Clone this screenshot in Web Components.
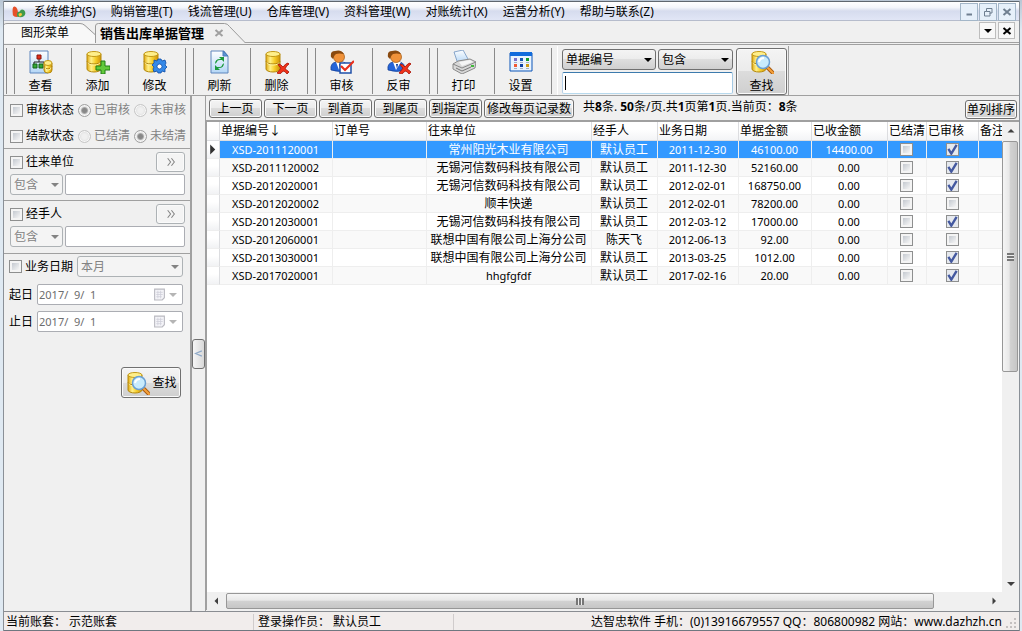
<!DOCTYPE html>
<html lang="zh-CN">
<head>
<meta charset="utf-8">
<title>销售出库单据管理</title>
<style>
html{height:100%}
body{margin:0;min-height:100%;display:flex;background:linear-gradient(#b9c6d4 0,#dfe9f2 30px,#dfe9f2);font-family:"Noto Sans","Noto Sans CJK SC",sans-serif;font-size:12px;line-height:16px;color:#000}
</style>
</head>
<body>
<sales-window></sales-window>
<script>
const BASE = `*{box-sizing:border-box}button,input,select{font:inherit;color:inherit;margin:0}`;
function define(name, css, html, setup) {
  const t = document.createElement('template');
  t.innerHTML = `<style>${BASE}${css}</style>${html}`;
  customElements.define(name, class extends HTMLElement {
    constructor() {
      super();
      this.attachShadow({ mode: 'open' }).append(t.content.cloneNode(true));
    }
    connectedCallback() {
      if (this.ready) return;
      this.ready = true;
      if (setup) setup(this, this.shadowRoot);
    }
  });
}

/* ---------- icons ---------- */
const cyl = (x, y, w, h) => `<path d="M${x} ${y + 3}v${h - 6}a${w / 2} 3 0 0 0 ${w} 0v-${h - 6}z" fill="url(#g)" stroke="#b58a0c"/><path d="M${x} ${y + h / 2}a${w / 2} 2.500 0 0 0 ${w} 0" fill="none" stroke="#a87c08"/><path d="M${x + 1} ${y + h / 2 + 1}a${w / 2 - 1} 2.500 0 0 0 ${w - 2} 0" fill="none" stroke="#fff3a0"/><ellipse cx="${x + w / 2}" cy="${y + 3}" rx="${w / 2}" ry="2.500" fill="#ffef8a" stroke="#c49a18"/>`;
const gold = `<defs><linearGradient id="g"><stop offset="0" stop-color="#e0a810"/><stop offset=".3" stop-color="#fff08a"/><stop offset=".6" stop-color="#f7cf2c"/><stop offset="1" stop-color="#cf920a"/></linearGradient><linearGradient id="b" x2="0" y2="1"><stop offset="0" stop-color="#fdfeff"/><stop offset="1" stop-color="#b4d6f6"/></linearGradient></defs>`;
const cross = `<path d="M13 14q3 0 5 3q3-4 5-4l1 1q-3 2-4 5q2 1 4 3l-2 2q-2-3-4-3q-2 3-4 3l-2-1q2-2 4-5q-2-1-3-4z" fill="#f0331a" stroke="#a81408" stroke-width=".8"/>`;
const person = `<path d="M1 20q-1-7 5-8h7q5 1 5 8q-8 3-17 0z" fill="#2464d8" stroke="#123c90" stroke-width=".7"/><path d="M6 12l3 8 5-8z" fill="#fff"/><path d="M9 14l1 5 1-5z" fill="#0b3c9a"/><circle cx="9" cy="7" r="5.500" fill="#f0923a" stroke="#a2560c" stroke-width=".7"/><path d="M1 7Q0 1 5 1q6-2 9 3q-5-1-8 0q-2 1-3 5z" fill="#8a4a10"/>`;
const lens = `<path d="M18 18l5 5" stroke="#a85a10" stroke-width="4" stroke-linecap="round"/><path d="M18 18l5 5" stroke="#f6a23c" stroke-width="2" stroke-linecap="round"/><circle cx="13" cy="12" r="6.500" fill="#c8ebfd" stroke="#6a9fd4" stroke-width="1.500"/><path d="M9 12q1-4 5-4" stroke="#fff" stroke-width="2" fill="none"/>`;
const ICONS = {
  view: `<path d="M1 1h18v22H1z" fill="url(#b)" stroke="#5f86bd"/><path d="M10 8v4M5 15v-3h10v2" stroke="#222" fill="none"/><path d="M8 5h4v4H8z" fill="#e0301c" stroke="#8c1408"/><path d="M4 14h4v4H4zM10 14h4v4h-4z" fill="#35a835" stroke="#14641a"/>` + cyl(15, 10, 8, 13),
  add: cyl(1, 1, 14, 21) + `<path d="M15 11h4v5h5v4h-5v4h-4v-4h-5v-4h5z" fill="#62c93c" stroke="#217d16"/>`,
  edit: cyl(1, 1, 14, 21) + `<g fill="#3489e8" stroke="#0c4da8" stroke-width=".8"><path d="M15 9h3l1 2 3-1 1 3-1 2 2 2-2 2v3l-3-1-1 2h-3l-1-2-3 1-1-3 1-2-2-2 2-2 0-3 3 1z"/><circle cx="16.500" cy="16.500" r="2.500" fill="#fff"/></g>`,
  refresh: `<path d="M3 1h13l4 5v17H3z" fill="url(#b)" stroke="#5f86bd"/><path d="M15 1v5h5z" fill="#5b93d6" stroke="#4a7cba"/><path d="M7 14q0-5 5-5h1L11 7h5v5l-2-2h-2q-3 0-3 2zM16 13q0 5-5 5h-1l2 2H7v-5l2 2h2q3 0 3-2z" fill="#1c9a3c"/>`,
  remove: cyl(1, 1, 14, 21) + cross,
  audit: person + `<path d="M10 13h11v10H10z" fill="#fff" stroke="#2050a8" stroke-width="1.500"/><path d="M11 16l4 4 9-9" fill="none" stroke="#e8301c" stroke-width="2.200"/>`,
  unaudit: person + cross,
  print: `<path d="M5 11L2 2l9-2 5 9v4H6z" fill="url(#b)" stroke="#6f93c0" stroke-width=".8"/><path d="M1 14l5-3 12-2 6 3-1 6-13 6-9-5z" fill="#d8d8d8" stroke="#8a8a8a"/><path d="M1 14l9 4 14-6" fill="none" stroke="#888"/><path d="M4 18l6 3 9-4" fill="none" stroke="#777"/><path d="M7 12l11-2 3 2-11 4z" fill="#f6f6f6"/><path d="M19 16h3" stroke="#42b83c" stroke-width="2"/>`,
  config: `<path d="M1 3h22v18H1z" fill="#eaf4fe" stroke="#0a55b8"/><path d="M1 2h22v4H1z" fill="#126cdc"/><path d="M5 8h3v3H5z" fill="#7a70c8"/><path d="M5 14h3v3H5z" fill="#f05a35"/><path d="M11 8h3v3h-3z" fill="#1659b4"/><path d="M11 14h3v3h-3z" fill="#0d43a4"/><path d="M17 8h3v3h-3z" fill="#149a28"/><path d="M17 14h3v3h-3z" fill="#cc9c14"/><path d="M5 12.500h3M11 12.500h3M17 12.500h3M5 18.500h3M11 18.500h3M17 18.500h3" stroke="#a0b0c4"/>`,
  find: cyl(2, 1, 14, 21) + lens,
  logo: `<path d="M3 18Q1 3 6 4q5 0 6 16-6 2-9-2z" fill="#e6512a"/><path d="M10 20q-2-8 4-8 2-5 7-2 4 5 0 9-5 4-11 1z" fill="#3f9a4c"/><path d="M12 16q3-3 6 0-1 4-5 4z" fill="#f3c63c"/>`,
  min: `<path d="M7 15h11v4H7z" fill="#6f7f90"/>`,
  restore: `<path d="M9 5h11v9h-4v6H5v-9h4z M9 11h7v4" fill="none" stroke="#6f7f90" stroke-width="2"/>`,
  close: `<path d="M5 6l14 12M19 6L5 18" fill="none" stroke="currentColor" stroke-width="4"/>`,
  down: `<path d="M4 8h16l-8 8z" fill="currentColor"/>`,
  up: `<path d="M5 15h14l-7-7z" fill="currentColor"/>`,
  left: `<path d="M16 5v14l-7-7z" fill="currentColor"/>`,
  right: `<path d="M9 5v14l7-7z" fill="currentColor"/>`,
  marker: `<path d="M7 1v22l11-11z" fill="currentColor"/>`,
  more: `<path d="M4 3l7 9-7 9M13 3l7 9-7 9" fill="none" stroke="currentColor" stroke-width="2.500"/>`,
  fold: `<path d="M21 5L4 12l17 7" fill="none" stroke="#8fa9c8" stroke-width="3"/>`,
  calendar: `<path d="M3 2h18v16l-4 4H3z" fill="#f4f4f8" stroke="#b9b9c0" stroke-width="2"/><path d="M6 8h12M6 12h12M6 16h10M9 5v14M14 5v14" stroke="#d0d0da" stroke-width="1.500"/>`
};
define('ui-icon', `:host{display:block;width:24px;height:24px;flex:none}svg{display:block;width:100%;height:100%}`, `<svg viewBox="0 0 24 24" aria-hidden="true"></svg>`,
  (el, r) => { r.querySelector('svg').innerHTML = gold + ICONS[el.getAttribute('name')]; });

/* ---------- controls ---------- */
define('combo-box', `:host{display:block;position:relative;height:21px;color:#000}
select{appearance:none;width:100%;height:100%;padding:0 16px 0 3px;border:1px solid #707070;border-radius:3px;background:linear-gradient(#f4f4f4,#ececec 50%,#dedede 50%,#d0d0d0);display:block;opacity:1;line-height:16px}
:host([disabled]){color:#838383}:host([disabled]) select{background:#f4f4f4;border-color:#adb2b5}
ui-icon{position:absolute;right:2px;top:5px;width:12px;height:12px;pointer-events:none}`,
`<select><option></option></select><ui-icon name="down"></ui-icon>`, (el, r) => {
  const s = r.querySelector('select');
  s.options[0].textContent = el.getAttribute('value');
  s.setAttribute('aria-label', el.getAttribute('label'));
  s.disabled = el.hasAttribute('disabled');
});
define('text-field', `:host{display:block;height:21px}input{display:block;width:100%;height:100%;padding:0 3px;border:1px solid #abadb3;border-radius:2px;background:#fff;outline:0}
:host([active]) input{border-color:#3d7bad #a4c9e3 #b7d9ed #b5cfe7;background:#fff linear-gradient(#000,#000) 2px center/1px 14px no-repeat}`,
`<input type="text">`, (el, r) => {
  const i = r.querySelector('input');
  i.setAttribute('aria-label', el.getAttribute('label'));
  i.disabled = el.hasAttribute('disabled');
});
define('date-field', `:host{display:flex;align-items:center;gap:4px;color:#6d6d6d}
label{color:#000;width:24px;flex:none}
.f{flex:1;display:flex;align-items:center;gap:1px;height:21px;border:1px solid #abadb3;border-radius:2px;background:#fff;padding:0 3px 0 1px;color:#b5b5b5}
input{flex:1;min-width:0;width:0;border:0;background:none;padding:0;color:#6d6d6d;outline:0;font-size:11px;height:18px;white-space:pre}
ui-icon{width:12px;height:12px}.c{width:13px;height:13px}`,
`<label for="d"></label><div class="f"><input id="d" type="text" disabled><ui-icon class="c" name="calendar"></ui-icon><ui-icon name="down"></ui-icon></div>`, (el, r) => {
  r.querySelector('label').textContent = el.getAttribute('label');
  r.querySelector('input').value = el.getAttribute('value');
});
define('check-box', `:host{display:block}label{display:flex;align-items:center;gap:3px}
input{appearance:none;width:13px;height:13px;flex:none;border:1px solid #8e8f8f;background:linear-gradient(135deg,#c4c9d0,#f6f6f6) content-box,#f4f4f4;padding:2px;display:block}
input:checked{background:url("data:image/svg+xml,%3Csvg xmlns='http://www.w3.org/2000/svg' viewBox='0 0 11 11'%3E%3Cpath d='M2 5l2.500 4L9 1.500' fill='none' stroke='%234459a0' stroke-width='2'/%3E%3C/svg%3E") border-box,#e6e9ee}`,
`<label><input type="checkbox"><slot></slot></label>`, (el, r) => {
  const i = r.querySelector('input');
  i.checked = el.hasAttribute('checked');
  if (el.getAttribute('label')) i.setAttribute('aria-label', el.getAttribute('label'));
});
define('radio-button', `:host{display:block;color:#838383}label{display:flex;align-items:center;gap:3px}
input{appearance:none;width:13px;height:13px;flex:none;border:1px solid #c6c6c6;border-radius:50%;background:#f0f0f0;box-shadow:inset 0 0 0 1px #f8f8f8,inset 0 0 3px #bbb}
input:checked{border-color:#a0a0a0;background:radial-gradient(#888 0 2px,#aaa 3px,#f4f4f4 4px)}`,
`<label><input type="radio" disabled><slot></slot></label>`, (el, r) => { r.querySelector('input').checked = el.hasAttribute('checked'); });
define('push-button', `:host{display:block;height:19px}
button{width:100%;height:100%;display:flex;align-items:center;justify-content:center;padding:0;border:1px solid #707070;border-radius:3px;background:linear-gradient(#f4f4f4,#ebebeb 50%,#dcdcdc 50%,#cfcfcf);box-shadow:inset 0 0 0 1px #fafafa;white-space:nowrap;overflow:hidden}
:host([stacked]) button{flex-direction:column;gap:4px}:host([inline]) button{gap:2px;padding-left:1px}
:host([quiet]) button{background:#f4f4f4;border-color:#adb2b5;color:#838383}`,
`<button type="button"><slot></slot></button>`, (el, r) => {
  if (el.getAttribute('label')) r.querySelector('button').setAttribute('aria-label', el.getAttribute('label'));
});

/* ---------- menu bar ---------- */
define('menu-bar', `:host{display:flex;align-items:center;height:20px;padding:1px 3px 0 7px;border-top:1px solid #5f676f;border-bottom:1px solid #b6bccc;background:linear-gradient(#fff,#f4f6fb 30%,#d6dcee 50%,#e1e6f6)}
ui-icon.l{width:15px;height:15px;margin-right:8px}nav{display:flex;gap:15px;flex:1}a{color:#000;text-decoration:none;white-space:nowrap}
.w{display:flex;gap:1px}button{width:18px;height:18px;padding:0;border:1px solid #a3b6c8;background:#e6f0fa;display:grid;place-items:center;color:#6f7f90}button ui-icon{width:12px;height:12px}`,
`<ui-icon class="l" name="logo"></ui-icon><nav></nav><div class="w"><button aria-label="最小化"><ui-icon name="min"></ui-icon></button><button aria-label="还原"><ui-icon name="restore"></ui-icon></button><button aria-label="关闭"><ui-icon name="close"></ui-icon></button></div>`,
(el, r) => {
  r.querySelector('nav').innerHTML = ['系统维护(S)', '购销管理(T)', '钱流管理(U)', '仓库管理(V)', '资料管理(W)', '对账统计(X)', '运营分析(Y)', '帮助与联系(Z)'].map(t => `<a href="#">${t}</a>`).join('');
});

/* ---------- document tabs ---------- */
define('tab-strip', `:host{display:flex;align-items:flex-end;height:24px;background:#f0f0f0;border-bottom:3px double #a0a0a0}
.t{position:relative;height:20px;display:flex;align-items:center;padding-top:2px}
.t>svg{position:absolute;left:0;bottom:-1px;width:100%;height:20px}
.t>a,.t>b,.t>ui-icon{position:relative}a{color:#000;text-decoration:none}
.one{width:91px;padding-left:17px}.two{width:150px;padding-left:5px;font-size:13px}
.two ui-icon{width:12px;height:12px;margin-left:9px;color:#a0a0a0}
.b{margin-left:auto;display:flex;gap:2px;padding:0 4px 3px 0}button{width:17px;height:17px;padding:0;border:1px solid #bdbdbd;background:#f8f8f8;display:grid;place-items:center}button ui-icon{width:12px;height:12px}`,
`<div class="t one"><svg viewBox="0 0 91 20" preserveAspectRatio="none"><path d="M0 1.500q1-1 3-1h74l14 12V20H0z" fill="#f8f8f8"/><path d="M0 1.500q1-1 3-1h73q3 0 5 2l10 9" fill="none" stroke="#9a9a9a"/></svg><a href="#">图形菜单</a></div>
<div class="t two"><svg viewBox="0 0 150 20" preserveAspectRatio="none"><path d="M.5 20V3q0-2.500 3-2.500h126q3 0 5 3L150 20z" fill="#f0f0f0"/><path d="M.5 20V3q0-2.500 3-2.500h126q3 0 5 3L150 19.500" fill="none" stroke="#9a9a9a"/></svg><b>销售出库单据管理</b><ui-icon name="close"></ui-icon></div>
<div class="b"><button aria-label="标签列表"><ui-icon name="down"></ui-icon></button><button aria-label="关闭标签"><ui-icon name="close"></ui-icon></button></div>`);

/* ---------- toolbar ---------- */
define('tool-group', `:host{display:flex;height:46px;border-left:1px solid #8a8a8a;margin-left:7px}`, `<slot></slot>`);
define('tool-button', `:host{display:block;width:57px;border-right:1px solid #8a8a8a}
button{width:100%;height:100%;border:0;background:none;padding:2px 5px 0 0;display:flex;flex-direction:column;align-items:center;gap:4px}`,
`<button type="button"><ui-icon></ui-icon><slot></slot></button>`, (el, r) => {
  const old = r.querySelector('ui-icon'), icon = document.createElement('ui-icon');
  icon.setAttribute('name', el.getAttribute('icon'));
  old.replaceWith(icon);
});
define('quick-search', `:host{display:grid;grid-template-columns:94px 75px 51px;column-gap:2px;row-gap:1px;margin:-2px 0 0 5px;padding:3px 2px 0 4px;height:49px;border-left:1px solid #fff;border-right:1px solid #a0a0a0;align-content:start}
text-field{grid-column:1/3;grid-row:2;height:22px}push-button{grid-column:3;grid-row:1/3;height:47px;margin:-1px -1px 0 1px}combo-box{height:21px}`,
`<combo-box value="单据编号" label="查找字段"></combo-box><combo-box value="包含" label="匹配方式"></combo-box><text-field label="查找内容" active></text-field><push-button stacked><ui-icon name="find"></ui-icon><span>查找</span></push-button>`);
define('tool-bar', `:host{display:flex;height:51px;padding:3px 0 0 2px;background:#f0f0f0;border-bottom:1px solid #a0a0a0}.edge{width:1px;height:46px;background:#8a8a8a}`,
`<div class="edge"></div>
<tool-group><tool-button icon="view">查看</tool-button><tool-button icon="add">添加</tool-button><tool-button icon="edit">修改</tool-button></tool-group>
<tool-group><tool-button icon="refresh">刷新</tool-button><tool-button icon="remove">删除</tool-button></tool-group>
<tool-group><tool-button icon="audit">审核</tool-button><tool-button icon="unaudit">反审</tool-button></tool-group>
<tool-group><tool-button icon="print">打印</tool-button><tool-button icon="config">设置</tool-button></tool-group>
<quick-search></quick-search>`);

/* ---------- filter side panel ---------- */
define('filter-panel', `:host{display:block;width:188px;flex:none;background:#f0f0f0;border-right:2px solid #a0a0a0}
section{border-bottom:1px solid #a0a0a0;padding:3px 5px 5px 6px}
.status{display:flex;flex-direction:column;gap:10px;padding:6px 0 4px 6px}
.row{display:flex;align-items:center;gap:4px}.status .row{height:16px}
.head{display:flex;justify-content:space-between;align-items:center;height:20px;margin-bottom:2px}
.head push-button{width:29px;height:20px}.head ui-icon{width:10px;height:10px}
.pair{display:flex;gap:2px}.pair combo-box{width:53px}.pair text-field{flex:1}
.last{padding-bottom:6px}
.dates{border:0;padding:2px 7px 0 5px;display:flex;flex-direction:column;gap:6px}
.dates .row combo-box{flex:1}
.dates .row{margin-bottom:1px}
.find{width:60px;height:31px;margin:29px 2px 0 auto}`,
`<section class="status"><div class="row"><check-box>审核状态</check-box><radio-button checked>已审核</radio-button><radio-button>未审核</radio-button></div>
<div class="row"><check-box>结款状态</check-box><radio-button>已结清</radio-button><radio-button checked>未结清</radio-button></div></section>
<section><div class="head"><check-box>往来单位</check-box><push-button quiet label="选择往来单位"><ui-icon name="more"></ui-icon></push-button></div><div class="pair"><combo-box value="包含" label="往来单位匹配" disabled></combo-box><text-field label="往来单位" disabled></text-field></div></section>
<section class="last"><div class="head"><check-box>经手人</check-box><push-button quiet label="选择经手人"><ui-icon name="more"></ui-icon></push-button></div><div class="pair"><combo-box value="包含" label="经手人匹配" disabled></combo-box><text-field label="经手人" disabled></text-field></div></section>
<section class="dates"><div class="row"><check-box>业务日期</check-box><combo-box value="本月" label="日期范围" disabled></combo-box></div>
<date-field label="起日" value="2017/  9/  1"></date-field><date-field label="止日" value="2017/  9/  1"></date-field>
<push-button class="find" inline><ui-icon name="find"></ui-icon><span>查找</span></push-button></section>`);

define('panel-splitter', `:host{display:flex;align-items:center;width:14px;flex:none;background:#f0f0f0;border-right:1px solid #a0a0a0}
button{width:13px;height:30px;padding:0;border:1px solid #707070;border-radius:3px;background:linear-gradient(90deg,#f6f6f6,#d8d8d8);display:grid;place-items:center}ui-icon{width:9px;height:11px}`,
`<button type="button" aria-label="收起面板"><ui-icon name="fold"></ui-icon></button>`);

/* ---------- pager ---------- */
define('page-bar', `:host{display:flex;align-items:flex-start;height:24px;padding:3px 2px 0 3px;gap:2px;background:#f0f0f0}push-button{width:53px}.wide{width:90px}p{margin:0 0 0 7px;white-space:nowrap}.sort{margin:1px 0 0 auto;width:52px}`,
`<push-button>上一页</push-button><push-button>下一页</push-button><push-button>到首页</push-button><push-button>到尾页</push-button><push-button>到指定页</push-button><push-button class="wide">修改每页记录数</push-button>
<p>共<b>8</b>条. <b>50</b>条/页.共<b>1</b>页第<b>1</b>页.当前页：<b>8</b>条</p><push-button class="sort">单列排序</push-button>`);

/* ---------- data grid ---------- */
const ROWS = [
  ['XSD-2011120001', '常州阳光木业有限公司', '默认员工', '2011-12-30', '46100.00', '14400.00', 1],
  ['XSD-2011120002', '无锡河信数码科技有限公司', '默认员工', '2011-12-30', '52160.00', '0.00', 1],
  ['XSD-2012020001', '无锡河信数码科技有限公司', '默认员工', '2012-02-01', '168750.00', '0.00', 1],
  ['XSD-2012020002', '顺丰快递', '默认员工', '2012-02-01', '78200.00', '0.00', 0],
  ['XSD-2012030001', '无锡河信数码科技有限公司', '默认员工', '2012-03-12', '17000.00', '0.00', 1],
  ['XSD-2012060001', '联想中国有限公司上海分公司', '陈天飞', '2012-06-13', '92.00', '0.00', 0],
  ['XSD-2013030001', '联想中国有限公司上海分公司', '默认员工', '2013-03-25', '1012.00', '0.00', 1],
  ['XSD-2017020001', 'hhgfgfdf', '默认员工', '2017-02-16', '20.00', '0.00', 1]
];
define('data-grid', `:host{display:block;overflow:hidden;background:#fff;min-width:0}
table{width:100%;border-collapse:separate;border-spacing:0;table-layout:fixed}
th,td{height:18px;padding:0;white-space:nowrap;overflow:hidden;border-right:1px solid #eee}
th{font-weight:400;text-align:left;padding-left:1px;background:linear-gradient(#fff,#fff 40%,#f3f4f6);border-right-color:#dcdde0;border-bottom:1px solid #dcdde0;height:19px}
th:last-child,td:last-child{border-right:0}
td{text-align:center;border-bottom:1px solid #eee;line-height:16px;padding-right:1px}td.n{font-size:11px}
tr:nth-child(even) td{background:#f9f9f9}tr.sel td{background:#3399ff;color:#fff}
tbody td:first-child,tbody tr.sel td:first-child{background:linear-gradient(#fff 40%,#f1f2f4);border-right-color:#dcdde0;color:#333}
td ui-icon{width:11px;height:11px}check-box{width:13px;margin:auto}
col:nth-child(1){width:13px}col:nth-child(2){width:113px}col:nth-child(3){width:94px}col:nth-child(4){width:165px}col:nth-child(5){width:66px}col:nth-child(6){width:81px}col:nth-child(7){width:73px}col:nth-child(8){width:76px}col:nth-child(9){width:39px}col:nth-child(10){width:52px}`,
`<table><colgroup>${'<col>'.repeat(11)}</colgroup><thead><tr><th></th><th>单据编号↓</th><th>订单号</th><th>往来单位</th><th>经手人</th><th>业务日期</th><th>单据金额</th><th>已收金额</th><th>已结清</th><th>已审核</th><th>备注</th></tr></thead><tbody></tbody></table>`,
(el, r) => {
  r.querySelector('tbody').innerHTML = ROWS.map((d, i) => `<tr class="${i ? '' : 'sel'}"><td>${i ? '' : '<ui-icon name="marker"></ui-icon>'}</td><td class="n">${d[0]}</td><td></td><td class="${/^\w+$/.test(d[1]) ? 'n' : ''}">${d[1]}</td><td>${d[2]}</td><td class="n">${d[3]}</td><td class="n">${d[4]}</td><td class="n">${d[5]}</td><td><check-box label="已结清"></check-box></td><td><check-box label="已审核" ${d[6] ? 'checked' : ''}></check-box></td><td></td></tr>`).join('');
});
define('scroll-bar', `:host{display:flex;background:#f0f0f0;color:#404040}
button{width:17px;height:17px;flex:none;padding:0;border:0;background:none;display:grid;place-items:center;color:inherit}ui-icon{width:12px;height:12px}
.track{flex:1;display:flex}.thumb{border:1px solid #979797;border-radius:2px;background:linear-gradient(#f5f5f5,#e8e8e8 45%,#d2d2d2 50%,#c6c6c6);display:grid;place-items:center}
.grip{width:8px;height:7px;background:repeating-linear-gradient(90deg,#777 0 2px,#eee 2px 3px)}
:host([axis=x]) .thumb{width:93%;height:16px;margin:1px 0 0 2px}
:host([axis=y]),:host([axis=y]) .track{flex-direction:column}
:host([axis=y]) .thumb{height:53%;width:16px;margin-top:2px;background:linear-gradient(90deg,#f5f5f5,#e8e8e8 45%,#d2d2d2 50%,#c6c6c6)}
:host([axis=y]) .grip{width:7px;height:8px;background:repeating-linear-gradient(#777 0 2px,#eee 2px 3px)}`,
`<button type="button" aria-label="后退"></button><div class="track"><div class="thumb"><div class="grip"></div></div></div><button type="button" aria-label="前进"></button>`, (el, r) => {
  const [a, b] = r.querySelectorAll('button'), x = el.getAttribute('axis') === 'x';
  a.innerHTML = `<ui-icon name="${x ? 'left' : 'up'}"></ui-icon>`;
  b.innerHTML = `<ui-icon name="${x ? 'right' : 'down'}"></ui-icon>`;
});
define('record-view', `:host{display:flex;flex-direction:column;flex:1;min-width:0;background:#f0f0f0}
.frame{flex:1;display:grid;grid-template-columns:minmax(0,1fr) 17px;grid-template-rows:minmax(0,1fr) 18px;border:2px solid #a0a0a0;border-width:2px 0 0 1px;background:#f0f0f0;margin-bottom:1px}`,
`<page-bar></page-bar><div class="frame"><data-grid></data-grid><scroll-bar axis="y"></scroll-bar><scroll-bar axis="x"></scroll-bar></div>`);

/* ---------- status bar ---------- */
define('status-bar', `:host{display:flex;align-items:center;height:20px;background:#f1edec;border-top:1px solid #8a8d92;border-bottom:1px solid #6f7780;white-space:nowrap;padding-top:1px}
span{height:16px;padding-left:4px;border-right:1px solid #d0cccc}.a{width:250px;padding-left:2px}.b{width:200px}.c{flex:1;border:0;min-width:0;display:flex;justify-content:flex-end;overflow:hidden}
svg{width:12px;height:12px;margin:3px 2px 0 3px;flex:none}`,
`<span class="a">当前账套： 示范账套</span><span class="b">登录操作员： 默认员工</span><span class="c">达智忠软件 手机：(0)13916679557 QQ：806800982 网站：www.dazhzh.cn</span><svg viewBox="0 0 12 12"><path d="M9 1h2v2H9zM5 5h2v2H5zM9 5h2v2H9zM1 9h2v2H1zM5 9h2v2H5zM9 9h2v2H9z" fill="#c4c0c0"/></svg>`);

define('sales-window', `:host{display:flex;flex-direction:column;flex:1;min-width:0;margin:1px 2px 0 3px;border:1px solid #8a9097;border-width:0 1px;background:#f0f0f0}main{flex:1;display:flex}`,
`<menu-bar></menu-bar><tab-strip></tab-strip><tool-bar></tool-bar><main><filter-panel></filter-panel><panel-splitter></panel-splitter><record-view></record-view></main><status-bar></status-bar>`);
</script>
</body>
</html>
